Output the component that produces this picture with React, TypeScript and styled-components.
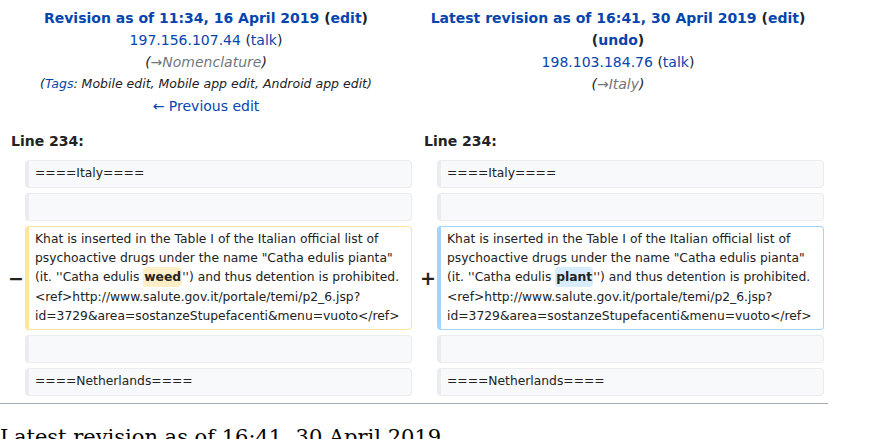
import React from "react";
import styled, { createGlobalStyle } from "styled-components";

const Global = createGlobalStyle`
  html, body { margin: 0; padding: 0; background: #fff; }
  body { font-family: "DejaVu Sans", sans-serif; color: #222; }
`;

const Page = styled.div`
  width: 828px;
  padding-top: 7px;
  font-size: 14px;
  line-height: 1.6;
`;

const Titles = styled.div`
  display: grid;
  grid-template-columns: 412px 412px;
`;

const TitleCol = styled.div`
  text-align: center;
  line-height: 22px;
`;

const TitleLine = styled.div`
  font-weight: bold;
`;

const Link = styled.a`
  color: #0645ad;
  text-decoration: none;
`;

const Comment = styled.div`
  font-style: italic;
  color: #222;
`;

const Grey = styled.span`
  color: #72777d;
`;

const Tags = styled.div`
  font-style: italic;
  font-size: 12.5px;
`;

const LineNos = styled.div`
  display: grid;
  grid-template-columns: 412px 412px;
  margin-top: 13px;
  line-height: 22px;
  font-weight: bold;
`;

const LineNo = styled.div<{ $pad: number }>`
  padding-left: ${(p) => p.$pad}px;
`;

const DiffTable = styled.div`
  display: grid;
  grid-template-columns: 25px 387px 25px 387px;
  row-gap: 5px;
  margin-top: 8px;
`;

const Marker = styled.div`
  display: flex;
  align-items: center;
  justify-content: flex-end;
  padding-right: 1px;
  font-size: 19px;
  font-weight: bold;
  line-height: 1;
  color: #222;
`;

const Cell = styled.div<{ $kind: "context" | "del" | "add" }>`
  box-sizing: border-box;
  min-height: 28px;
  padding: 3px 6px;
  border-style: solid;
  border-width: 1px 1px 1px 4px;
  border-radius: 4px;
  border-color: ${(p) =>
    p.$kind === "del" ? "#ffe49c" : p.$kind === "add" ? "#a3d3ff" : "#eaecf0"};
  background: ${(p) => (p.$kind === "context" ? "#f8f9fa" : "#fff")};
  font-size: 12.32px;
  line-height: 19.2px;
  white-space: pre-wrap;
  word-wrap: break-word;
  color: #222;
`;

const Change = styled.span<{ $kind: "del" | "add" }>`
  font-weight: bold;
  background: ${(p) => (p.$kind === "del" ? "#feeec8" : "#d8ecff")};
  border-radius: 4px;
  padding: 3px 1px;
`;

const Rule = styled.hr`
  margin: 7px 0 0 0;
  border: 0;
  border-top: 1px solid #a2a9b1;
  height: 0;
  width: 828px;
`;

const Heading = styled.h2`
  margin: 20px 0 0 0;
  font-family: "DejaVu Serif", serif;
  font-weight: normal;
  font-size: 21px;
  line-height: 1.3;
  color: #000;
`;

const Empty = () => <Cell $kind="context">{" "}</Cell>;

const para = (word: React.ReactNode) => (
  <>
    Khat is inserted in the Table I of the Italian official list of psychoactive
    drugs under the name "Catha edulis pianta" (it. ''Catha edulis {word}'') and
    thus detention is prohibited.{"\n"}&lt;ref&gt;http://www.salute.gov.it/portale/temi/p2_6.jsp?id=3729&amp;area=sostanzeStupefacenti&amp;menu=vuoto&lt;/ref&gt;
  </>
);

export default function App() {
  return (
    <>
      <Global />
      <Page>
        <Titles>
          <TitleCol>
            <TitleLine>
              <Link>Revision as of 11:34, 16 April 2019</Link> (<Link>edit</Link>)
            </TitleLine>
            <div>
              <Link>197.156.107.44</Link> (<Link>talk</Link>)
            </div>
            <Comment>
              (<Grey>→Nomenclature</Grey>)
            </Comment>
            <Tags>
              (<Link>Tags</Link>: Mobile edit, Mobile app edit, Android app edit)
            </Tags>
            <div>
              <Link>← Previous edit</Link>
            </div>
          </TitleCol>
          <TitleCol>
            <TitleLine>
              <Link>Latest revision as of 16:41, 30 April 2019</Link> (<Link>edit</Link>)
            </TitleLine>
            <TitleLine>
              (<Link>undo</Link>)
            </TitleLine>
            <div>
              <Link>198.103.184.76</Link> (<Link>talk</Link>)
            </div>
            <Comment>
              (<Grey>→Italy</Grey>)
            </Comment>
          </TitleCol>
        </Titles>
        <LineNos>
          <LineNo $pad={11}>Line 234:</LineNo>
          <LineNo $pad={12}>Line 234:</LineNo>
        </LineNos>
        <DiffTable>
          <div />
          <Cell $kind="context">====Italy====</Cell>
          <div />
          <Cell $kind="context">====Italy====</Cell>

          <div />
          <Empty />
          <div />
          <Empty />

          <Marker>−</Marker>
          <Cell $kind="del">{para(<Change $kind="del">weed</Change>)}</Cell>
          <Marker>+</Marker>
          <Cell $kind="add">{para(<Change $kind="add">plant</Change>)}</Cell>

          <div />
          <Empty />
          <div />
          <Empty />

          <div />
          <Cell $kind="context">====Netherlands====</Cell>
          <div />
          <Cell $kind="context">====Netherlands====</Cell>
        </DiffTable>
        <Rule />
        <Heading>Latest revision as of 16:41, 30 April 2019</Heading>
      </Page>
    </>
  );
}
